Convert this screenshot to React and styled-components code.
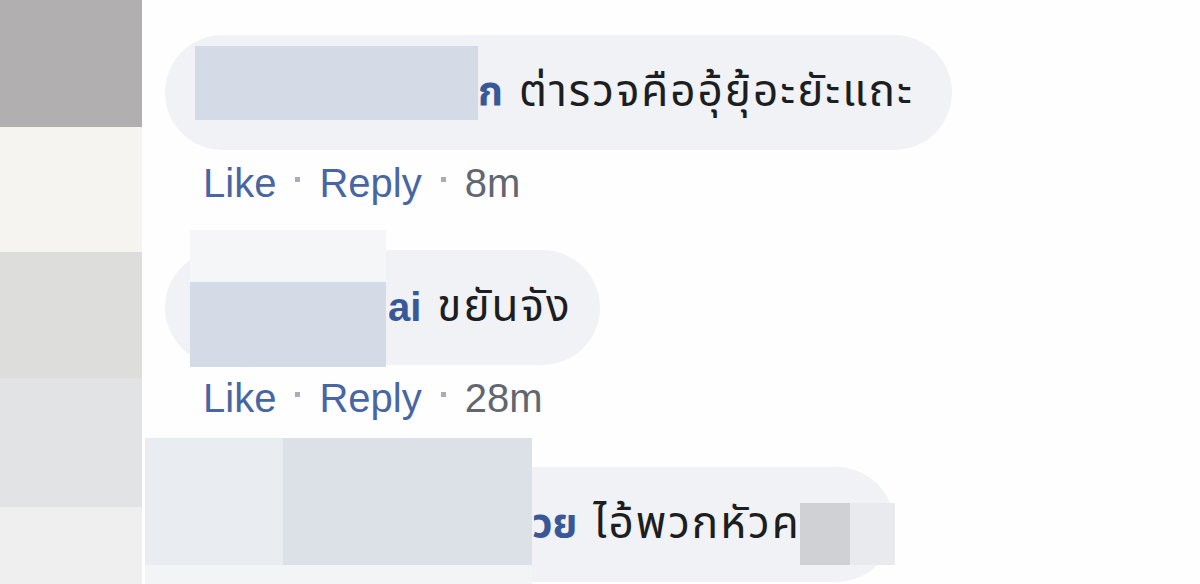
import React from "react";
import styled, { createGlobalStyle } from "styled-components";

const Global = createGlobalStyle`
  html, body { margin: 0; padding: 0; background: #ffffff; overflow: hidden; }
  * { box-sizing: border-box; }
`;

const Page = styled.div`
  display: flex;
  width: 1200px;
  height: 584px;
  font-family: Tahoma, "Liberation Sans", "Noto Sans Thai", "Noto Sans", sans-serif;
`;

const LeftStrip = styled.div`
  width: 142px;
  display: flex;
  flex-direction: column;
  flex-shrink: 0;
`;

const Swatch = styled.div`
  height: ${(p) => p.$h}px;
  background: ${(p) => p.$c};
  flex-shrink: 0;
`;

const Main = styled.div`
  flex: 1;
  background: #fefefe;
  padding: 35px 0 0 23px;
  display: flex;
  flex-direction: column;
  align-items: flex-start;
  position: relative;
`;

const Comment = styled.div`
  display: flex;
  flex-direction: column;
  align-items: flex-start;
  margin-bottom: ${(p) => p.$gap ?? 34}px;
`;

const Bubble = styled.div`
  position: relative;
  display: inline-flex;
  align-items: center;
  height: 115px;
  border-radius: 58px;
  background: #f0f2f5;
  padding: 0 ${(p) => p.$pr ?? 34}px 0 30px;
  font-size: 40px;
  white-space: nowrap;
  color: #1c1e21;
`;

const Name = styled.span`
  font-weight: bold;
  color: #385898;
  padding-left: ${(p) => p.$hidden}px;
  margin-right: 16px;
`;

const Text = styled.span`
  color: #1c1e21;
  font-size: 44px;
  letter-spacing: 2px;
`;

const Redaction = styled.div`
  position: absolute;
  left: ${(p) => p.$x}px;
  top: ${(p) => p.$y}px;
  width: ${(p) => p.$w}px;
  height: ${(p) => p.$h}px;
  background: ${(p) => p.$c};
`;

const Actions = styled.div`
  height: 66px;
  display: flex;
  align-items: center;
  padding-left: 38px;
  font-family: "Liberation Sans", Arial, sans-serif;
  font-size: 40px;
`;

const Link = styled.span`
  color: #4766a3;
`;

const Dot = styled.span`
  display: inline-block;
  width: 5px;
  height: 5px;
  background: #a7adb8;
  margin: 0 19px;
  transform: translateY(-4px);
`;

const Time = styled.span`
  color: #616770;
`;

function ActionRow({ time }) {
  return (
    <Actions>
      <Link>Like</Link>
      <Dot />
      <Link>Reply</Link>
      <Dot />
      <Time>{time}</Time>
    </Actions>
  );
}

export default function App() {
  return (
    <>
      <Global />
      <Page>
        <LeftStrip>
          <Swatch $h={127} $c="#b1afb0" />
          <Swatch $h={125} $c="#f5f4f0" />
          <Swatch $h={126} $c="#dddedb" />
          <Swatch $h={129} $c="#e2e3e5" />
          <Swatch $h={77} $c="#efefef" />
        </LeftStrip>
        <Main>
          <Comment>
            <Bubble $pr={38}>
              <Redaction $x={30} $y={11} $w={283} $h={74} $c="#d4dbe6" />
              <Name $hidden={283}>ก</Name>
              <Text>ต่ารวจคืออุ้ยุ้อะยัะแถะ</Text>
            </Bubble>
            <ActionRow time="8m" />
          </Comment>
          <Comment $gap={36}>
            <Bubble $pr={28}>
              <Redaction $x={25} $y={-20} $w={196} $h={52} $c="#f4f6f8" />
              <Redaction $x={25} $y={32} $w={196} $h={85} $c="#d4dbe6" />
              <Name $hidden={193}>ai</Name>
              <Text>ขยันจัง</Text>
            </Bubble>
            <ActionRow time="28m" />
          </Comment>
          <Comment $gap={0}>
            <Bubble $pr={93}>
              <Redaction $x={-20} $y={-29} $w={138} $h={127} $c="#e9ecf0" />
              <Redaction $x={118} $y={-29} $w={249} $h={127} $c="#dce1e8" />
              <Redaction $x={-20} $y={98} $w={387} $h={30} $c="#f3f4f6" />
              <Name $hidden={337}>วย</Name>
              <Text>ไอ้พวกหัวค</Text>
              <Redaction $x={635} $y={36} $w={50} $h={62} $c="#d0d1d4" />
              <Redaction $x={685} $y={36} $w={45} $h={62} $c="#e9eaed" />
            </Bubble>
          </Comment>
        </Main>
      </Page>
    </>
  );
}
